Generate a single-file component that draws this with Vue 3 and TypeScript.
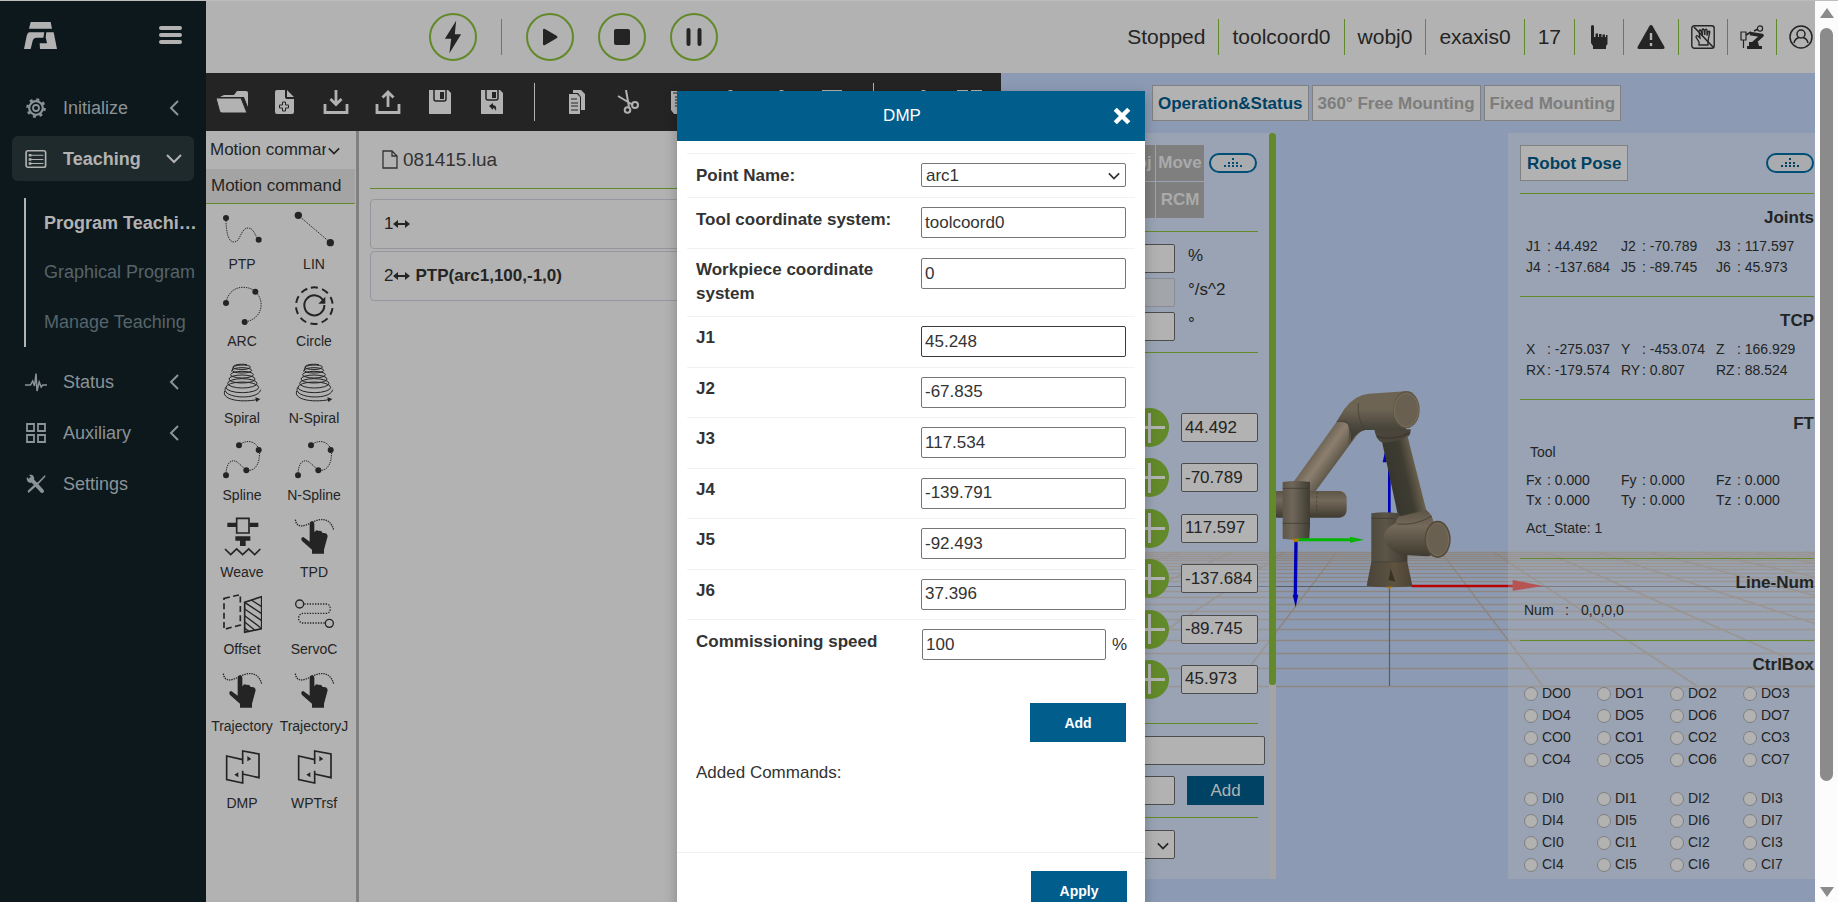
<script setup lang="ts">
import { ref } from 'vue'

interface Cell { label: string; value: string }

const subMenu = ['Program Teaching', 'Graphical Program', 'Manage Teaching']
const robotState = ['Stopped', 'toolcoord0', 'wobj0', 'exaxis0', '17']
const stateIcons = [
  { id: 'hand', label: 'Manual mode', wide: false },
  { id: 'warn', label: 'Warnings', wide: true },
  { id: 'nodrag', label: 'Drag mode off', wide: false },
  { id: 'arm', label: 'Robot type', wide: false },
  { id: 'user', label: 'Account', wide: false },
]
const toolsA = ['folder', 'newfile', 'download', 'upload', 'save', 'saveas']
const toolsB = ['copy', 'cut', 'paste', 'peak', 'peak', 'box']
const toolsC = ['peak', 'blocks']
const commands = [
  { label: 'PTP', icon: 'ptp' }, { label: 'LIN', icon: 'lin' },
  { label: 'ARC', icon: 'arc' }, { label: 'Circle', icon: 'circle' },
  { label: 'Spiral', icon: 'spiral' }, { label: 'N-Spiral', icon: 'spiral' },
  { label: 'Spline', icon: 'spline' }, { label: 'N-Spline', icon: 'spline' },
  { label: 'Weave', icon: 'weave' }, { label: 'TPD', icon: 'tpd' },
  { label: 'Offset', icon: 'offset' }, { label: 'ServoC', icon: 'servo' },
  { label: 'Trajectory', icon: 'tpd' }, { label: 'TrajectoryJ', icon: 'tpd' },
  { label: 'DMP', icon: 'dmp' }, { label: 'WPTrsf', icon: 'dmp' },
]
const program = ['', 'PTP(arc1,100,-1,0)']
const jog = ref(['44.492', '-70.789', '117.597', '-137.684', '-89.745', '45.973'])

const joints: Cell[] = [
  { label: 'J1', value: '44.492' }, { label: 'J2', value: '-70.789' }, { label: 'J3', value: '117.597' },
  { label: 'J4', value: '-137.684' }, { label: 'J5', value: '-89.745' }, { label: 'J6', value: '45.973' },
]
const tcp: Cell[] = [
  { label: 'X', value: '-275.037' }, { label: 'Y', value: '-453.074' }, { label: 'Z', value: '166.929' },
  { label: 'RX', value: '-179.574' }, { label: 'RY', value: '0.807' }, { label: 'RZ', value: '88.524' },
]
const ft: Cell[] = ['Fx', 'Fy', 'Fz', 'Tx', 'Ty', 'Tz'].map((label) => ({ label, value: '0.000' }))
const ports = (prefixes: string[]) => prefixes.flatMap((p) => [0, 1, 2, 3, 4, 5, 6, 7].map((n) => p + n))
const ioGroups = [ports(['DO', 'CO']), ports(['DI', 'CI'])]

const pointName = ref('arc1')
const toolCoord = ref('toolcoord0')
const workpiece = ref('0')
const speed = ref('100')
const target = ref(['45.248', '-67.835', '117.534', '-139.791', '-92.493', '37.396'])

const gridRows = [552, 554, 556, 558, 560, 563, 566, 569, 573, 577, 581, 591, 597, 604, 611, 619, 629, 640, 653, 668, 686]
const gridCols = Array.from({ length: 31 }, (_, i) => i - 15).filter((k) => k !== 0)
</script>

<template>
  <div class="app">
    <svg class="sprite" aria-hidden="true">
      <symbol id="i-gear" viewBox="0 0 20 20"><g fill="none" stroke="currentColor"><circle cx="10" cy="10" r="6.8" stroke-width="2.2" /><circle cx="10" cy="10" r="3" stroke-width="1.8" /><circle cx="10" cy="10" r="8.6" stroke-width="2.4" stroke-dasharray="3 3.754" /></g></symbol>
      <symbol id="i-list" viewBox="0 0 24 20"><g fill="none" stroke="currentColor"><rect x="1.2" y="1" width="21.3" height="18" rx="2" stroke-width="1.8" /><path d="M6 6h14M6 10.5h14M6 15h14" stroke-width="1.1" /><path d="M4 6h3M4 10.5h3M4 15h3" stroke-width="2.8" /></g></symbol>
      <symbol id="i-pulse" viewBox="0 0 22 20"><path d="M0 13h5.500l2.200-4 1.800 5L11 1.500 12 19l2.200-9 2 5 1.600-2H22" fill="none" stroke="currentColor" stroke-width="1.500" /></symbol>
      <symbol id="i-squares" viewBox="0 0 20 20"><path d="M1 1h7v7H1zM12 1h7v7h-7zM1 12h7v7H1zM12 12h7v7h-7z" fill="none" stroke="currentColor" stroke-width="1.800" /></symbol>
      <symbol id="i-tools" viewBox="0 0 20 20"><path d="M19 1l-7 7-2 1-8.500 8 1 2 9-8 1.500-1.500 6.500-7z" fill="currentColor" /><path d="M5 5l11 12" stroke="currentColor" stroke-width="4" stroke-linecap="round" /><path d="M1 3l3 3 2-2-3-3c3-1 6 1 5 5L5 9C2 9 0 6 1 3z" fill="currentColor" /></symbol>

      <symbol id="i-bolt" viewBox="0 0 20 38"><path d="M13.500 1L1 21h7L6 37 19 16h-7z" fill="currentColor" /></symbol>
      <symbol id="i-hand" viewBox="0 0 24 24"><path d="M4 1.500Q4 0 5.500 0T7 1.500V12h1.500V8.500H11V12h1V9h2.500v3h1V9.500H18V12h1v-2h1.500V19L19 21v3H6v-3l-2-3z" fill="currentColor" /></symbol>
      <symbol id="i-warn" viewBox="0 0 28 24"><path d="M14 0Q15 0 15.700 1.200L27.500 22Q28 24 26 24H2Q0 24 .5 22L12.300 1.200Q13 0 14 0z" fill="currentColor" /><path d="M14 8v7M14 18v3" stroke="#b2b2b2" stroke-width="2.400" /></symbol>
      <symbol id="i-nodrag" viewBox="0 0 24 24"><g fill="none" stroke="currentColor"><rect x=".8" y=".8" width="22.400" height="22.400" rx="2.500" stroke-width="1.400" /><path d="M8 20v-3l-3-5q0-2 2-1l2 2-1-7q1-2 2 0l1.500 4L11 5q1-2 2 0l.8 5L14 5q1-1.500 2 0v5.500l1.200-4q1.500-1 1.600.5L17 16v4z" stroke-width="1.300" /><path d="M3 2l19 20" stroke-width="1.500" /></g></symbol>
      <symbol id="i-arm" viewBox="0 0 24 24"><g fill="none" stroke="currentColor"><path d="M1 7h5v8H1zM3.500 15v8" stroke-width="1.200" /><path d="M6 10l5-3M14 6l4-2" stroke-width="1.800" /><circle cx="20" cy="3.500" r="2.600" stroke-width="1.200" /><path d="M10 8.500l12 2-9 8" stroke-width="3.600" stroke-linejoin="round" /></g><path d="M9 17h9l1 4h3v3H7v-3h2z" fill="currentColor" /></symbol>
      <symbol id="i-user" viewBox="0 0 24 24"><g fill="none" stroke="currentColor" stroke-width="1.500"><circle cx="12" cy="12" r="11" /><circle cx="12" cy="9" r="4" /><path d="M5 18q1-4.500 5-5.500M19 18q-1-4.500-5-5.500" /></g></symbol>

      <symbol id="i-folder" viewBox="0 0 32 24"><path d="M4 7L8 5h10l3-4h9q2 0 2 2v14L28 7z" fill="currentColor" /><path d="M0 8h25l6 15H6Q4 23 3.500 21z" fill="currentColor" stroke="#242424" stroke-width="1" /></symbol>
      <symbol id="i-newfile" viewBox="0 0 32 24"><path d="M7 2q0-2 2-2h8v7q0 2 2 2h7v13q0 2-2 2H9q-2 0-2-2zM19 0l7 7h-7z" fill="currentColor" /><path d="M14.500 12h3v3h3v3h-3v3h-3v-3h-3v-3h3z" fill="none" stroke="#242424" /></symbol>
      <symbol id="i-download" viewBox="0 0 32 24"><path d="M16 0v13M10.500 9l5.500 5.500L21.500 9M5 14v8.500h22V14" fill="none" stroke="currentColor" stroke-width="2.800" /></symbol>
      <symbol id="i-upload" viewBox="0 0 32 24"><path d="M16 17V3M10.500 7.500L16 2l5.500 5.500M5 14v8.500h22V14" fill="none" stroke="currentColor" stroke-width="2.800" /></symbol>
      <symbol id="i-save" viewBox="0 0 32 24"><path d="M5 0h19l3 3v21H5z" fill="currentColor" /><path d="M10 0v9q0 2 2 2h8q2 0 2-2V0" fill="none" stroke="#242424" stroke-width="1.500" /><path d="M16 2h4v7h-4z" fill="#242424" /></symbol>
      <symbol id="i-saveas" viewBox="0 0 32 24"><path d="M5 0h19l3 3v21H5z" fill="currentColor" /><path d="M10 0v8q0 2 2 2h8q2 0 2-2V0" fill="none" stroke="#242424" stroke-width="1.500" /><path d="M16 2h4v6h-4zM13 16l4-3v2q4 0 3 6-1-3-3-3v2z" fill="#242424" /></symbol>
      <symbol id="i-copy" viewBox="0 0 32 24"><path d="M12 0h8l4 4v16h-4V7l-3-4h-5z" fill="currentColor" /><path d="M8 4h8l3 3v17H8z" fill="currentColor" /><path d="M10 9h6M10 13h7M10 16h7M10 20h7" stroke="#242424" stroke-width="1.200" /></symbol>
      <symbol id="i-cut" viewBox="0 0 32 24"><g fill="none" stroke="currentColor" stroke-width="2"><path d="M14 0l3 17M6 6l15 9" /><circle cx="15.500" cy="20" r="2.800" /><circle cx="23" cy="15" r="3" /></g></symbol>
      <symbol id="i-paste" viewBox="0 0 32 24"><path d="M8 1h18v18l-5 5H11l-3-4z" fill="currentColor" /><path d="M10 3h14M12 7h10M12 10h10M12 13h10M12 16h10" stroke="#242424" stroke-width="1.200" /></symbol>
      <symbol id="i-peak" viewBox="0 0 32 24"><path d="M15 0h3l8 12-10 12L6 12z" fill="currentColor" /></symbol>
      <symbol id="i-box" viewBox="0 0 32 24"><path d="M7 1h18v22H7z" fill="none" stroke="currentColor" stroke-width="2" /></symbol>
      <symbol id="i-blocks" viewBox="0 0 32 24"><path d="M4 0h11v11H4zM18 0h11v11H18zM4 14h11v10H4zM18 14h11v10H18z" fill="currentColor" /></symbol>

      <symbol id="i-ptp" viewBox="0 0 120 120"><path d="M12 27C12 75 20 99 36 99c20 0 20-42 42-42 18 0 20 23 32 35" class="dots" /><circle cx="12" cy="27" r="9" /><circle cx="110" cy="92" r="9" /></symbol>
      <symbol id="i-lin" viewBox="0 0 120 120"><path d="M13 19l96 82" class="dots" /><circle cx="13" cy="19" r="11" /><circle cx="109" cy="101" r="11" /></symbol>
      <symbol id="i-arc" viewBox="0 0 120 120"><path d="M12 51C16 22 38 4 62 4c16 0 28 4 38 13C130 44 122 100 68 108" class="dots" /><circle cx="12" cy="51" r="9" /><circle cx="100" cy="17" r="9" /><circle cx="68" cy="108" r="9" /></symbol>
      <symbol id="i-circle" viewBox="0 0 120 120"><g fill="none" stroke="currentColor"><circle cx="61" cy="59" r="55" stroke-width="6" stroke-dasharray="21 13.560" transform="rotate(-101 61 59)" /><path d="M88 45a30 30 0 1 0 3 12" stroke-width="6" /></g><path d="M94 32v21H73z" /></symbol>
      <symbol id="i-spiral" viewBox="0 0 120 120"><g fill="none" stroke="currentColor" stroke-width="3"><path d="M75 5C50 1 34 7 33 12c0 10 52 10 52 0 0-8-50-8-52 2L29 26" /><ellipse cx="60" cy="22" rx="29" ry="8" /><ellipse cx="60" cy="35" rx="34" ry="10" /><ellipse cx="60" cy="48" rx="39" ry="12" /><ellipse cx="61" cy="61" rx="44" ry="14" /><ellipse cx="61" cy="73" rx="49" ry="16" /><path d="M12 72C-10 106 110 114 116 80M8 84c-10 30 60 34 96 26" /></g><path d="M100 103l15 5-12 9z" /></symbol>
      <symbol id="i-spline" viewBox="0 0 120 120"><path d="M12 106c0-46 23-51 38-36l23 21c27 4 42-21 39-59C105 5 75-5 51 16" class="dots" /><circle cx="51" cy="16" r="9" /><circle cx="110" cy="30" r="9" /><circle cx="73" cy="91" r="9" /><circle cx="12" cy="106" r="9" /></symbol>
      <symbol id="i-weave" viewBox="0 0 120 120"><path d="M16 17h26v13H16zM83 17h26v13H83zM40 58h45v13H71v16H54V71H40z" /><path d="M44 4h37v44H44zM9 96l17 17 18-17 18 17 18-17 18 17 17-17" fill="none" stroke="currentColor" stroke-width="5" /></symbol>
      <symbol id="i-tpd" viewBox="0 0 120 120"><path d="M4 8C8 35 30 28 50 18S105-6 119 38" class="dots bold" /><path d="M47 22q0-9 7-9t7 9v24q6-10 13-4 8-3 12 6 14-2 15 10L90 98v12H54V98L24 72q-6-10 4-12l19 14z" /></symbol>
      <symbol id="i-offset" viewBox="0 0 120 120"><g fill="none" stroke="currentColor" stroke-width="5"><path d="M6 13L55 2v91L6 106z" stroke-dasharray="18 10" /><path d="M68 25l51-17v96l-51 11z" /><path d="M88 18l31 20M68 25l51 34M68 45l51 35M68 65l48 36M68 84l30 24M68 103l14 10" stroke-width="4" /></g></symbol>
      <symbol id="i-servo" viewBox="0 0 120 120"><g fill="none" stroke="currentColor" stroke-width="4"><circle cx="17" cy="30" r="12" /><circle cx="106" cy="88" r="12" /><path d="M31 30h66c16 0 16 28 0 28H28c-18 0-20 29 0 29h64" stroke-dasharray="4 4" /></g></symbol>
      <symbol id="i-dmp" viewBox="0 0 120 120"><path d="M62 48V9l49 9v71L62 78M62 35L14 24v71l48 10V68" fill="none" stroke="currentColor" stroke-width="5" /><path d="M76 24l12 9-12 7zM49 73l-12 7 12 8z" /></symbol>
      <symbol id="i-pill" viewBox="0 0 48 20"><path d="M23 5h2v2h-2zM19 9h2v2h-2zM23 9h2v2h-2zM27 9h2v2h-2zM15 12h2v2h-2zM19 12h2v2h-2zM23 12h2v2h-2zM27 12h2v2h-2zM31 12h2v2h-2z" fill="currentColor" /></symbol>
      <symbol id="i-down" viewBox="0 0 14 8"><path d="M1 1l6 6 6-6" fill="none" stroke="currentColor" stroke-width="2" /></symbol>
    </svg>

    <aside class="sidebar">
      <div class="brand">
        <svg class="logo" viewBox="0 0 99 81" role="img" aria-label="Logo"><path d="M20 0h60l4 20H15zM15 31h46l-3 16H37q-8 0-11 9l-6 25H0L8 42q2-9 7-11zM67 31h22l10 50H48l-1-17h22l-4-18z" fill="#b2b2b2" /></svg>
        <button class="burger" aria-label="Toggle menu"><i></i><i></i><i></i></button>
      </div>
      <nav>
        <a href="#" class="nav-item"><svg class="nav-icon"><use href="#i-gear" /></svg><span>Initialize</span><svg class="chev" viewBox="0 0 10 16"><path d="M9 1L2 8l7 7" /></svg></a>
        <a href="#" class="nav-item active"><svg class="nav-icon"><use href="#i-list" /></svg><span>Teaching</span><svg class="chev wide" viewBox="0 0 16 10"><path d="M1 1l7 7 7-7" /></svg></a>
        <div class="sub">
          <a v-for="(s, i) in subMenu" :key="s" href="#" :class="{ current: i === 0 }">{{ s }}</a>
        </div>
        <a href="#" class="nav-item"><svg class="nav-icon"><use href="#i-pulse" /></svg><span>Status</span><svg class="chev" viewBox="0 0 10 16"><path d="M9 1L2 8l7 7" /></svg></a>
        <a href="#" class="nav-item"><svg class="nav-icon"><use href="#i-squares" /></svg><span>Auxiliary</span><svg class="chev" viewBox="0 0 10 16"><path d="M9 1L2 8l7 7" /></svg></a>
        <a href="#" class="nav-item"><svg class="nav-icon"><use href="#i-tools" /></svg><span>Settings</span></a>
      </nav>
    </aside>

    <main class="main">
      <header class="topbar">
        <div class="run">
          <button class="round" aria-label="Enable"><svg width="18" height="36"><use href="#i-bolt" /></svg></button>
          <i class="rule"></i>
          <button class="round" aria-label="Start"><svg width="16" height="18" viewBox="0 0 16 18"><path d="M1 2q0-2 2-1l12 7q1 1 0 2L3 17q-2 1-2-1z" fill="#242424" /></svg></button>
          <button class="round" aria-label="Stop"><svg width="16" height="16" viewBox="0 0 16 16"><rect width="16" height="16" rx="2" fill="#242424" /></svg></button>
          <button class="round" aria-label="Pause"><svg width="16" height="18" viewBox="0 0 16 18"><path d="M2.500 2v14M13.500 2v14" stroke="#242424" stroke-width="4" stroke-linecap="round" /></svg></button>
        </div>
        <div class="state">
          <span v-for="t in robotState" :key="t" class="state-item">{{ t }}</span>
          <button v-for="b in stateIcons" :key="b.id" class="state-item icon" :aria-label="b.label"><svg :class="{ wide: b.wide }"><use :href="'#i-' + b.id" /></svg></button>
        </div>
      </header>

      <div class="work">
        <section class="editor">
          <div class="toolbar">
            <span class="files"><button v-for="t in toolsA" :key="t" :aria-label="t"><svg><use :href="'#i-' + t" /></svg></button></span>
            <i class="sep"></i>
            <button v-for="(t, i) in toolsB" :key="'b' + i" :aria-label="t"><svg><use :href="'#i-' + t" /></svg></button>
            <i class="sep"></i>
            <span class="tail"><button v-for="t in toolsC" :key="'c' + t" :aria-label="t"><svg><use :href="'#i-' + t" /></svg></button></span>
          </div>
          <div class="columns">
            <div class="commands">
              <div class="pick">
                <select aria-label="Command group"><option>Motion command</option></select>
                <svg class="arrow"><use href="#i-down" /></svg>
              </div>
              <h2>Motion command</h2>
              <div class="cmd-grid">
                <button v-for="c in commands" :key="c.label"><svg><use :href="'#i-' + c.icon" /></svg><span>{{ c.label }}</span></button>
              </div>
            </div>
            <div class="program">
              <div class="file">
                <svg viewBox="0 0 16 19"><path d="M1 1h9l5 5v12H1zM10 1v5h5" fill="none" stroke="#333" stroke-width="1.300" /></svg>
                <span>081415.lua</span>
              </div>
              <div v-for="(line, i) in program" :key="i" class="line">
                <span>{{ i + 1 }}</span>
                <svg viewBox="0 0 17 8"><path d="M0 4l5-4v3h7V0l5 4-5 4V5H5v3z" fill="#242424" /></svg>
                <b>{{ line }}</b>
              </div>
            </div>
          </div>
        </section>

        <section class="stage">
          <svg class="scene" viewBox="1001 73 814 829" preserveAspectRatio="xMinYMin slice" role="img" aria-label="Robot model">
            <defs>
              <linearGradient id="g-fore" gradientUnits="userSpaceOnUse" x1="555" y1="995" x2="625" y2="1045"><stop offset="0" stop-color="#6f6555" /><stop offset=".35" stop-color="#8c7f70" /><stop offset="1" stop-color="#4f4a3c" /></linearGradient>
              <linearGradient id="g-top" x1="0" y1="0" x2="0" y2="1"><stop offset="0" stop-color="#6d6352" /><stop offset=".35" stop-color="#6e6454" /><stop offset=".75" stop-color="#46433a" /><stop offset="1" stop-color="#3a3930" /></linearGradient>
              <linearGradient id="g-upper" gradientUnits="userSpaceOnUse" x1="785" y1="1070" x2="870" y2="1050"><stop offset="0" stop-color="#38372e" /><stop offset=".5" stop-color="#3f3d32" /><stop offset="1" stop-color="#776b57" /></linearGradient>
              <linearGradient id="g-cyl" x1="0" y1="0" x2="1" y2="0"><stop offset="0" stop-color="#5c5548" /><stop offset=".35" stop-color="#70675a" /><stop offset="1" stop-color="#3f3c32" /></linearGradient>
              <linearGradient id="g-wr" x1="0" y1="0" x2="0" y2="1"><stop offset="0" stop-color="#5e5546" /><stop offset=".35" stop-color="#74695a" /><stop offset="1" stop-color="#3f3b30" /></linearGradient>
              <linearGradient id="g-col" x1="0" y1="0" x2="1" y2="0"><stop offset="0" stop-color="#4f4a3e" /><stop offset=".4" stop-color="#5c5548" /><stop offset="1" stop-color="#3d3a31" /></linearGradient>
              <linearGradient id="g-base" x1="0" y1="0" x2="1" y2="0"><stop offset="0" stop-color="#49443a" /><stop offset=".6" stop-color="#5f5340" /><stop offset="1" stop-color="#4b4334" /></linearGradient>
            </defs>
            <g stroke="#8d8681" stroke-width="1.500">
              <path v-for="y in gridRows" :key="y" :d="`M900 ${y}.500H1900`" />
              <path v-for="k in gridCols" :key="'k' + k" :d="`M${1389 + 52 * k} 552L${1389 + 154 * k} 686`" />
            </g>
            <path d="M900 586.500H1900M1389.500 586V686" stroke="#5c5d61" stroke-width="1.200" />
            <g transform="translate(1130 120) scale(.33333)">
              <path d="M778 1020v160" stroke="#0000b8" stroke-width="8" /><path d="M766 990l-8 37h12z" fill="#0000b8" />
              <path d="M755 960l78-10 57 225-20 30h-62z" fill="url(#g-upper)" />
              <path d="M490 1087L620 905l25-40h120l-60 65q-20 5-35 30L555 1116h-30z" fill="url(#g-fore)" />
              <path d="M620 905l25-40q30-40 70-44l113-7v116H705q-25 3-42 35-2-40-10-52-12-10-33-8z" fill="url(#g-top)" />
              <path d="M620 905q30-4 36 6 4 16 1 60M685 850q-4 50 22 80" fill="none" stroke="#403c32" stroke-width="2" />
              <path d="M733 928h109q0 15-6 20-38 20-78 20-20-5-25-40z" fill="#4a453a" /><path d="M740 950q50 14 99-12" fill="none" stroke="#2e2b24" stroke-width="2" />
              <ellipse cx="829" cy="869" rx="40" ry="56" fill="#625846" /><ellipse cx="829" cy="870" rx="36" ry="50" fill="#6a6051" stroke="#7a6e5c" stroke-width="3" />
              <rect x="420" y="1113" width="230" height="80" rx="22" fill="url(#g-wr)" />
              <path d="M563 1115q-7 38 0 76" fill="none" stroke="#403c31" stroke-width="2" stroke-dasharray="8 5" />
              <path d="M458 1086q40-6 82 0v130l-2 40q-40 6-80 0z" fill="url(#g-cyl)" /><path d="M458 1105h82M458 1210h82" stroke="#3a372d" stroke-width="2" />
              <path d="M724 1180q40-6 82 0l28 40-2 105H724z" fill="url(#g-col)" /><path d="M724 1195h70" stroke="#38352c" stroke-width="2" />
              <path d="M724 1325h108l15 72q-69 10-137 0z" fill="url(#g-base)" /><path d="M724 1325h108" stroke="#38352c" stroke-width="2" /><path d="M782 1346l-6 34 20 5z" fill="#373326" />
              <path d="M804 1190q45-10 85-20 20 15 22 42l20 55q-10 40-40 42l-70-4q-40-8-60-45-5-30 35-50z" fill="url(#g-wr)" />
              <path d="M801 1212q55 6 105-24" fill="none" stroke="#39362c" stroke-width="2" />
              <ellipse cx="923" cy="1258" rx="39" ry="56" fill="#554b3b" /><ellipse cx="923" cy="1258" rx="33" ry="49" fill="#6a6051" stroke="#7a6e5c" stroke-width="3" />
              <path d="M845 1398h310" stroke="#b80000" stroke-width="8" /><path d="M1148 1380l92 18-92 14z" fill="#b82424" />
              <path d="M500 1259h165" stroke="#00b400" stroke-width="9" /><path d="M660 1250l42 9-42 9z" fill="#00b400" />
              <path d="M498 1262l-2 165" stroke="#0000b4" stroke-width="10" /><path d="M488 1424h17l-8 38z" fill="#0000b4" />
              <path d="M486 1256h22l-5 10h-11zM770 1400h16l-8 8z" fill="#b87800" />
            </g>
          </svg>
          <div class="tabs">
            <button class="on">Operation&amp;Status</button><button>360° Free Mounting</button><button>Fixed Mounting</button>
          </div>
          <div class="panels">
            <div class="ops">
              <div class="ops-body">
                <div class="modes">
                  <div class="mode-grid"><button>Joint</button><button>Wobj</button><button>Move</button><button>Tool</button><button>IO</button><button>RCM</button></div>
                  <button class="pill" aria-label="Collapse operations"><svg><use href="#i-pill" /></svg></button>
                </div>
                <hr />
                <div class="limits">
                  <label><input type="text" />%</label>
                  <label><input type="text" disabled />°/s^2</label>
                  <label><input type="text" />°</label>
                </div>
                <hr />
                <div class="jog">
                  <div v-for="(v, i) in jog" :key="i" class="jog-row">
                    <button class="plus" :aria-label="'Increase J' + (i + 1)"></button>
                    <input v-model="jog[i]" type="text" :aria-label="'Joint ' + (i + 1)" />
                  </div>
                </div>
                <hr />
                <input class="full" type="text" aria-label="Point name" />
                <div class="add-row"><input type="text" aria-label="Point value" /><button>Add</button></div>
                <hr />
                <div class="pick small"><select aria-label="Option"><option></option></select><svg class="arrow"><use href="#i-down" /></svg></div>
              </div>
              <div class="track"><i></i></div>
            </div>

            <div class="pose">
              <div class="pose-head">
                <button>Robot Pose</button>
                <button class="pill" aria-label="Collapse pose"><svg><use href="#i-pill" /></svg></button>
              </div>
              <hr />
              <h3>Joints</h3>
              <dl><div v-for="c in joints" :key="c.label"><dt>{{ c.label }}</dt><dd>: {{ c.value }}</dd></div></dl>
              <hr />
              <h3>TCP</h3>
              <dl><div v-for="c in tcp" :key="c.label"><dt>{{ c.label }}</dt><dd>: {{ c.value }}</dd></div></dl>
              <hr />
              <h3>FT</h3>
              <p class="tool">Tool</p>
              <dl class="ft"><div v-for="c in ft" :key="c.label"><dt>{{ c.label }}</dt><dd>: {{ c.value }}</dd></div></dl>
              <p class="act">Act_State: 1</p>
              <hr />
              <h3>Line-Num</h3>
              <p class="num"><span>Num</span><span>:</span><span>0,0,0,0</span></p>
              <hr />
              <h3>CtrlBox</h3>
              <div v-for="(g, i) in ioGroups" :key="i" class="io">
                <label v-for="p in g" :key="p"><input type="radio" :name="p" />{{ p }}</label>
              </div>
            </div>
          </div>
        </section>
      </div>
    </main>

    <div class="scrollbar" aria-hidden="true">
      <svg viewBox="0 0 14 10"><path d="M7 0l7 10H0z" fill="#8b8b8b" /></svg>
      <i></i>
      <svg viewBox="0 0 14 10"><path d="M0 0h14L7 10z" fill="#8b8b8b" /></svg>
    </div>

    <div class="overlay">
      <form class="dialog" role="dialog" aria-labelledby="dlg-title" @submit.prevent>
        <header>
          <h1 id="dlg-title">DMP</h1>
          <button type="button" aria-label="Close"><svg viewBox="0 0 16 16"><path d="M2 2l12 12M14 2L2 14" stroke="#fff" stroke-width="4" /></svg></button>
        </header>
        <div class="fields">
          <div class="row first"><label for="f-point">Point Name:</label><div class="pick"><select id="f-point" v-model="pointName"><option>arc1</option></select><svg class="arrow"><use href="#i-down" /></svg></div></div>
          <div class="row"><label for="f-tool">Tool coordinate system:</label><input id="f-tool" v-model="toolCoord" type="text" /></div>
          <div class="row tall"><label for="f-wobj">Workpiece coordinate system</label><input id="f-wobj" v-model="workpiece" type="text" /></div>
          <div class="targets">
            <div v-for="(v, i) in target" :key="i" class="row"><label :for="'f-j' + i">J{{ i + 1 }}</label><input :id="'f-j' + i" v-model="target[i]" type="text" :class="{ hot: i === 0 }" /></div>
          </div>
          <div class="row speed"><label for="f-speed">Commissioning speed</label><div class="unit"><input id="f-speed" v-model="speed" type="text" /><span>%</span></div></div>
          <button type="button" class="primary add">Add</button>
          <p>Added Commands:</p>
        </div>
        <footer><button type="submit" class="primary">Apply</button></footer>
      </form>
    </div>
  </div>
</template>

<style>
body { margin: 0; overflow: hidden; }
</style>

<style scoped>
* { box-sizing: border-box; }
.app { position: relative; display: flex; height: 100vh; overflow: hidden; border-top: 1px solid #bdbdbd; background: #b2b2b2; color: #242424; font: 17px/24px "Liberation Sans", Arial, sans-serif; }
.sprite { position: absolute; width: 0; height: 0; }
svg { display: block; }
button, input, select { font: inherit; color: inherit; margin: 0; }
button { padding: 0; border: 0; background: none; }
a { color: inherit; text-decoration: none; }
h1, h2, h3, p, dl, dd { margin: 0; font-size: 17px; font-weight: 400; }
.dots { fill: none; stroke: currentColor; stroke-width: 3; stroke-dasharray: 4 3; }
.dots.bold { stroke-width: 4; }

.sidebar { flex: 0 0 206px; min-width: 0; padding: 0 12px; background: #0d181d; color: #8a9396; font-size: 18px; }
.brand { display: flex; align-items: center; justify-content: space-between; height: 84px; padding: 0 12px 16px; }
.logo { width: 33px; height: 27px; }
.burger { display: grid; gap: 3px; width: 23px; }
.burger i { height: 4px; border-radius: 2px; background: #b2b2b2; }
nav { display: grid; grid-template-columns: minmax(0, 1fr); }
.nav-item { display: flex; align-items: center; height: 45px; margin-bottom: 6px; padding: 0 15px 0 13px; border-radius: 6px; }
.nav-item span { flex: 1; margin-left: 16px; }
.nav-icon { width: 22px; height: 20px; }
.nav-item.active { padding-right: 12px; background: #1f2a2c; color: #b2b2b2; font-weight: 700; margin-bottom: 17px; }
.chev { width: 10px; height: 16px; fill: none; stroke: currentColor; stroke-width: 2; }
.chev.wide { width: 16px; height: 10px; }
.sub { display: grid; grid-template-columns: 154px; height: 149px; margin: 0 0 12px 12px; padding-left: 18px; border-left: 2px solid #b2b2b2; color: #566469; align-items: center; }
.sub a { overflow: hidden; white-space: nowrap; text-overflow: ellipsis; }
.sub .current { color: #b2b2b2; font-weight: 700; }

.main { flex: 1; min-width: 0; display: flex; flex-direction: column; }
.topbar { display: flex; justify-content: space-between; align-items: center; height: 72px; padding-left: 223px; }
.run { display: flex; align-items: center; gap: 24px; }
.round { display: grid; place-items: center; width: 48px; height: 48px; border: 2px solid #62892a; border-radius: 50%; color: #242424; }
.rule { width: 1px; height: 36px; background: #62892a; }
.state { display: flex; font-size: 21px; padding-right: 2px; }
.state-item { display: flex; align-items: center; height: 36px; padding: 0 13px; border-left: 1px solid #62892a; white-space: nowrap; }
.state-item:first-child { border-left: 0; }
.state-item.icon { padding: 0 12px; }
.state-item:last-child { padding-right: 0; }
.state-item svg { width: 24px; height: 24px; }
.state-item svg.wide { width: 30px; }

.work { flex: 1; min-height: 0; display: flex; }
.editor { flex: 0 0 795px; display: flex; flex-direction: column; }
.toolbar { display: flex; align-items: center; height: 58px; background: #242424; color: #b2b2b2; }
.toolbar button { width: 51px; display: grid; place-items: center; }
.toolbar svg { width: 32px; height: 24px; }
.sep { width: 1px; height: 38px; margin: 0 16px; background: #b2b2b2; }
.files, .tail { display: flex; }
.tail { padding-left: 10px; }
.toolbar .files button { width: 52px; }
.toolbar .tail button { width: 46px; }
.columns { flex: 1; display: flex; }
.commands { flex: 0 0 153px; border-right: 3px solid #808080; }
.pick { position: relative; height: 38px; }
.pick select { width: 100%; height: 100%; appearance: none; border: 0; border-radius: 0; background: none; padding: 0 28px 0 4px; outline: 0; }
.commands .pick select { padding-right: 30px; }
.pick .arrow { position: absolute; right: 16px; top: 50%; width: 12px; height: 8px; margin-top: -3px; pointer-events: none; }
.commands h2 { width: 149px; height: 35px; padding-left: 5px; line-height: 34px; background: #a4a4a4; border-bottom: 1px solid #62892a; }
.cmd-grid { display: grid; grid-template-columns: 72px 72px; grid-auto-rows: 77px; }
.cmd-grid button { display: flex; flex-direction: column; align-items: center; gap: 5px; padding-top: 5px; font-size: 14px; line-height: 20px; }
.cmd-grid svg { width: 40px; height: 40px; fill: currentColor; }
.program { flex: 1; min-width: 0; padding-left: 11px; }
.file { display: flex; align-items: center; gap: 5px; height: 58px; margin-bottom: 10px; padding-left: 12px; border-bottom: 1px solid #62892a; font-size: 19px; color: #333; }
.file svg { width: 16px; height: 19px; }
.line { display: flex; align-items: center; height: 50px; margin-bottom: 2px; padding-left: 13px; border: 1px solid #96969e; border-radius: 4px; }
.line svg { width: 17px; height: 8px; margin-right: 5px; }

.stage { position: relative; flex: 1; min-width: 0; display: flex; flex-direction: column; background: #8c9bb3; }
.scene { position: absolute; inset: 0; width: 100%; height: 100%; }
.tabs { position: relative; display: flex; gap: 3px; padding: 12px 0 12px 151px; font-weight: 700; }
.tabs button { height: 36px; padding: 1px 5px 0; border: 1px solid #808080; background: #b2b2b2; color: #7d7d7d; white-space: nowrap; font-weight: 700; }
.tabs .on, .pose-head button { color: #004263; }
.panels { position: relative; display: flex; justify-content: space-between; height: 746px; padding-left: 12px; }
.ops, .pose { background: rgba(178, 178, 178, .34); }
.ops { display: flex; width: 263px; }
.ops-body { flex: 1; padding: 12px 0 0 12px; min-width: 0; }
.modes { display: flex; justify-content: flex-end; align-items: flex-start; gap: 5px; height: 74px; padding-right: 12px; }
.mode-grid { display: grid; grid-template-columns: 48px 48px 48px; gap: 1px; }
.mode-grid button { height: 36px; background: #7f7f7f; color: #aaa; font-weight: 700; }
.pill { display: grid; place-items: center; width: 48px; height: 20px; border: 2px solid #004f77; border-radius: 10px; background: #a9abaf; color: #004f77; }
.modes .pill { flex: none; margin-top: 8px; }
.pill svg { width: 48px; height: 20px; margin: -2px; }
hr { height: 1px; margin: 12px 0; border: 0; background: #62892a; }
.ops hr { margin-right: 11px; }
.ops input, .ops .pick { height: 29px; border: 1px solid #4d4d4d; border-radius: 2px; background: #b2b2b2; padding: 0 3px; min-width: 0; }
.limits { display: grid; gap: 5px; margin-bottom: -1px; }
.limits label { display: flex; gap: 13px; }
.limits input { width: 150px; }
.limits input:disabled { border-color: #888d94; background: #a2a5aa; }
.jog { display: flex; flex-direction: column; justify-content: space-between; height: 281px; margin: 60px 11px 29px 0; }
.jog-row { display: flex; justify-content: flex-end; align-items: center; height: 29px; gap: 12px; }
.jog-row input { width: 77px; }
.plus { width: 39px; height: 39px; flex: none; border-radius: 50%; background: linear-gradient(#b2b2b2, #b2b2b2) center / 30px 3px no-repeat, linear-gradient(#b2b2b2, #b2b2b2) center / 3px 30px no-repeat, #62892a; }
.ops .full { display: block; width: 240px; margin-bottom: 11px; }
.add-row { display: flex; gap: 12px; }
.add-row input { width: 150px; }
.add-row button { width: 77px; background: #004263; color: #b2b2b2; }
.ops .small { width: 150px; }
.small .arrow { right: 5px; }
.track { width: 7px; background: #a4a4a4; border-radius: 3px; }
.track i { display: block; height: 74%; border-radius: 3px; background: #62892a; }

.pose { width: 307px; padding: 12px 1px 0 12px; font-size: 14px; line-height: 21px; }
.pose-head { display: flex; justify-content: space-between; align-items: center; height: 36px; }
.pose-head button:first-child { height: 36px; padding: 0 6px; border: 1px solid #808080; background: #b2b2b2; font-size: 17px; font-weight: 700; }
.pose p, .pose dl, .pose dd { font-size: 14px; }
.pose h3 { height: 24px; line-height: 24px; text-align: right; font-weight: 700; }
dl { display: grid; grid-template-columns: repeat(3, 95px); padding: 6px 0 6px 6px; }
dl.ft { line-height: 20px; padding: 7px 0 8px 6px; }
dl div { display: flex; white-space: nowrap; }
dt { width: 21px; }
.tool { padding: 6px 10px 0; }
.act { padding: 0 6px 7px; }
.num { display: flex; padding: 5px 0 7px 4px; }
.num span:nth-child(1) { width: 41px; }
.num span:nth-child(2) { width: 16px; }
.io { display: grid; grid-template-columns: repeat(4, 73px); row-gap: 1px; padding: 6px 0 0 4px; }
.io + .io { padding-top: 18px; }
.io label { display: flex; align-items: center; gap: 4px; }
.io input { appearance: none; width: 14px; height: 14px; border: 1px solid #808080; border-radius: 50%; background: #b2b2b2; }

.scrollbar { flex: 0 0 23px; display: flex; flex-direction: column; align-items: center; padding: 7px 0 5px; background: #fcfcfc; }
.scrollbar svg { width: 14px; height: 10px; }
.scrollbar i { flex: 0 1 753px; width: 13px; margin: 10px 0 auto; border-radius: 7px; background: #8b8b8b; }

.overlay { position: absolute; inset: 0; display: flex; justify-content: center; align-items: flex-start; padding: 90px 16px 0 0; overflow: hidden; }
.dialog { width: 468px; flex: none; background: #fff; color: #333; box-shadow: 0 4px 12px rgba(0, 0, 0, .25); }
.dialog header { display: flex; align-items: center; height: 50px; padding: 0 14px; background: #005d8c; color: #fff; }
.dialog h1 { flex: 1; text-align: center; }
.dialog header button { width: 18px; height: 18px; }
.fields { margin: 12px 10px 0; }
.row { display: grid; grid-template-columns: 225px 205px; height: 51px; padding: 9px 0 0 9px; border-top: 1px solid #f2f2f2; align-items: start; }
.row label { padding-top: 1px; font-weight: 700; max-width: 200px; }
.row input, .row .pick { width: 100%; height: 31px; padding: 0 3px; border: 1px solid #767676; border-radius: 2px; background: #fff; outline: 0; }
.row .pick { height: 24px; padding: 0; }
.row .pick .arrow { right: 5px; }
.row input.hot { border-color: #3b3b3b; }
.row.first { height: 44px; }
.row.tall { height: 68px; }
.targets { display: grid; grid-auto-rows: 1fr; height: 303px; }
.targets .row { height: auto; }
.targets label, .tall label { padding-top: 0; }
.unit { display: flex; gap: 6px; padding-left: 1px; }
.row .unit input { width: 184px; }
.unit span { line-height: 31px; }
.primary { display: block; width: 96px; height: 39px; margin-left: auto; background: #005d8c; color: #fff; font-size: 14px; font-weight: 700; }
.primary.add { margin: 33px 9px 19px auto; }
.fields p { height: 91px; padding-left: 9px; }
.dialog footer { height: 80px; padding: 18px; border-top: 1px solid #f0f0f0; }
</style>
